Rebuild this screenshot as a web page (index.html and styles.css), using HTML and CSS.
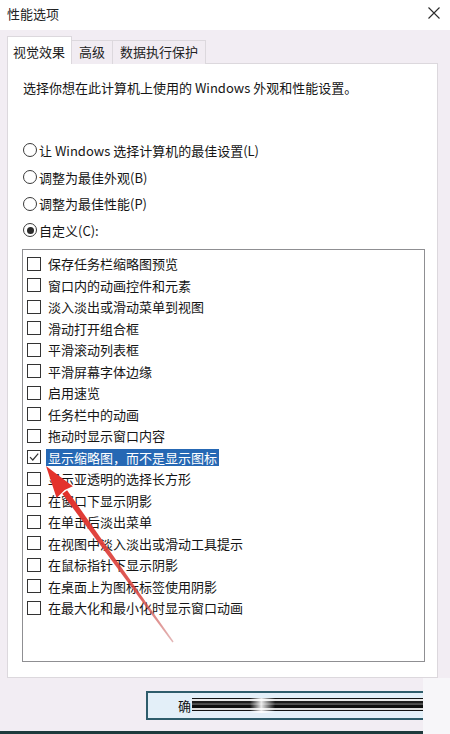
FILE: index.html
```html
<!DOCTYPE html>
<html lang="zh-CN">
<head>
    <meta charset="UTF-8">
    <meta name="viewport" content="width=device-width, initial-scale=1.0">
    <title>性能选项</title>
    <link rel="stylesheet" href="styles.css">
</head>
<body>

<div class="titlebar">
    <span class="title">性能选项</span>
    <svg class="close" width="12" height="12" viewBox="0 0 12 12">
        <path d="M0.5 0.5 L11.5 11.5 M11.5 0.5 L0.5 11.5" stroke="#2b2b2b" stroke-width="1.1" fill="none"/>
    </svg>
</div>

<div class="dialog">
    <div class="tabs">
        <div class="tab active">视觉效果</div>
        <div class="tab">高级</div>
        <div class="tab">数据执行保护</div>
    </div>

    <div class="panel">
        <p class="intro">选择你想在此计算机上使用的 Windows 外观和性能设置。</p>

        <div class="radios">
            <div class="radio-row"><span class="radio"></span>让 Windows 选择计算机的最佳设置(L)</div>
            <div class="radio-row"><span class="radio"></span>调整为最佳外观(B)</div>
            <div class="radio-row"><span class="radio"></span>调整为最佳性能(P)</div>
            <div class="radio-row"><span class="radio on"></span>自定义(C):</div>
        </div>

        <div class="listbox">
            <div class="item"><span class="box"></span><span class="label">保存任务栏缩略图预览</span></div>
            <div class="item"><span class="box"></span><span class="label">窗口内的动画控件和元素</span></div>
            <div class="item"><span class="box"></span><span class="label">淡入淡出或滑动菜单到视图</span></div>
            <div class="item"><span class="box"></span><span class="label">滑动打开组合框</span></div>
            <div class="item"><span class="box"></span><span class="label">平滑滚动列表框</span></div>
            <div class="item"><span class="box"></span><span class="label">平滑屏幕字体边缘</span></div>
            <div class="item"><span class="box"></span><span class="label">启用速览</span></div>
            <div class="item"><span class="box"></span><span class="label">任务栏中的动画</span></div>
            <div class="item"><span class="box"></span><span class="label">拖动时显示窗口内容</span></div>
            <div class="item">
                <span class="box">
                    <svg width="12" height="12" viewBox="0 0 12 12"><path d="M2 6.2 L4.8 9 L10.2 2.6" stroke="#333" stroke-width="1.2" fill="none"/></svg>
                </span>
                <span class="label selected">显示缩略图，而不是显示图标</span>
            </div>
            <div class="item"><span class="box"></span><span class="label">显示亚透明的选择长方形</span></div>
            <div class="item"><span class="box"></span><span class="label">在窗口下显示阴影</span></div>
            <div class="item"><span class="box"></span><span class="label">在单击后淡出菜单</span></div>
            <div class="item"><span class="box"></span><span class="label">在视图中淡入淡出或滑动工具提示</span></div>
            <div class="item"><span class="box"></span><span class="label">在鼠标指针下显示阴影</span></div>
            <div class="item"><span class="box"></span><span class="label">在桌面上为图标标签使用阴影</span></div>
            <div class="item"><span class="box"></span><span class="label">在最大化和最小化时显示窗口动画</span></div>
        </div>
    </div>
</div>

<div class="footer">
    <div class="footer-main">
        <div class="ok-button">确<span class="streak"></span></div>
    </div>
    <div class="footer-edge"></div>
</div>

<!-- annotation arrow drawn over the dialog -->
<svg class="arrow" width="450" height="734" viewBox="0 0 450 734">
    <defs>
        <linearGradient id="shaft" x1="64" y1="492" x2="173" y2="642" gradientUnits="userSpaceOnUse">
            <stop offset="0" stop-color="#e2302a"/>
            <stop offset="0.7" stop-color="#d9453f" stop-opacity="0.85"/>
            <stop offset="1" stop-color="#c87070" stop-opacity="0.5"/>
        </linearGradient>
    </defs>
    <polygon points="62.3,493.8 67.1,490.2 173.6,641.6 172.4,642.4" fill="url(#shaft)"/>
    <polygon points="46,466 72.8,486.2 64.7,490 56.6,497.9" fill="#e4332c"/>
</svg>

</body>
</html>
```

FILE: styles.css
```css
* {
    box-sizing: border-box;
    margin: 0;
    padding: 0;
}

body {
    width: 450px;
    height: 734px;
    overflow: hidden;
    position: relative;
    font-family: "Noto Sans CJK SC", "Noto Sans", sans-serif;
    font-size: 13px;
    color: #151515;
    background-color: #f2edf3;
}

.titlebar {
    height: 30px;
    background: #fff;
    display: flex;
    align-items: center;
    justify-content: space-between;
    padding: 0 10px 4px 7px;
}

.title {
    font-size: 13px;
    color: #222;
}

.dialog {
    padding: 6px 12px 0 7px;
}

.tabs {
    display: flex;
    align-items: flex-end;
    height: 28px;
    margin-bottom: -1px;
}

.tab {
    height: 24px;
    line-height: 22px;
    padding: 0 7px;
    border: 1px solid #dcd8dd;
    border-bottom: none;
    border-left: none;
    background: #f1ecf2;
    color: #222;
}

.tab.active {
    position: relative;
    height: 28px;
    line-height: 30px;
    padding: 0 5px;
    border-left: 1px solid #dcd8dd;
    background: #fff;
    width: 65px;
}

.panel {
    background: #fff;
    border: 1px solid #dcd8dd;
    padding: 14px 12px 15px 14px;
}

.intro {
    line-height: 20px;
    margin-left: 1px;
}

.radios {
    margin-top: 39px;
}

.radio-row {
    height: 26.7px;
    display: flex;
    align-items: center;
    gap: 2px;
}

.radio {
    width: 14px;
    height: 14px;
    border: 1px solid #3a3a3a;
    border-radius: 50%;
    background: #fff;
    margin-left: 1px;
    display: flex;
    align-items: center;
    justify-content: center;
}

.radio.on::after {
    content: "";
    width: 7px;
    height: 7px;
    border-radius: 50%;
    background: #2a2a2a;
}

.listbox {
    margin-top: 5px;
    height: 413px;
    border: 1px solid #8f8f92;
    padding: 3px 0 0 4px;
}

.item {
    height: 21.5px;
    display: flex;
    align-items: center;
}

.box {
    width: 14px;
    height: 14px;
    border: 1px solid #333;
    background: #fff;
    display: flex;
    align-items: center;
    justify-content: center;
    margin-right: 5px;
}

.label {
    padding: 0 2px;
    line-height: 17px;
}

.label.selected {
    background: #2668b4;
    color: #fff;
}

.footer {
    height: 56px;
    display: flex;
}

.footer-main {
    flex: 1;
    padding: 13px 0 0 146px;
    border-bottom: 3px solid #1e3a3c;
}

.ok-button {
    width: 277px;
    height: 29px;
    border: 2px solid #2e5c6b;
    border-right: none;
    background: #e3eff8;
    display: flex;
    align-items: center;
    padding-left: 30px;
    color: #111;
}

.streak {
    flex: 1;
    height: 15px;
    margin-left: 1px;
    background:
        linear-gradient(to right, rgba(227, 239, 248, 0) 0, rgba(227, 239, 248, 0) 25%, rgba(255, 255, 255, 0.9) 30%, rgba(227, 239, 248, 0) 36%),
        linear-gradient(to bottom, #111 0, #111 1px, #e8e8e8 1px, #e8e8e8 3px, #1b1b1b 3px, #1b1b1b 5px, #444 5px, #555 7px, #0e0e0e 7px, #0e0e0e 10px, #ddd 10px, #ddd 12px, #111 12px, #111 13px, #e3eff8 13px);
}

.footer-edge {
    width: 27px;
    background: #f7f6f9;
}

.arrow {
    position: absolute;
    top: 0;
    left: 0;
    pointer-events: none;
}
```
